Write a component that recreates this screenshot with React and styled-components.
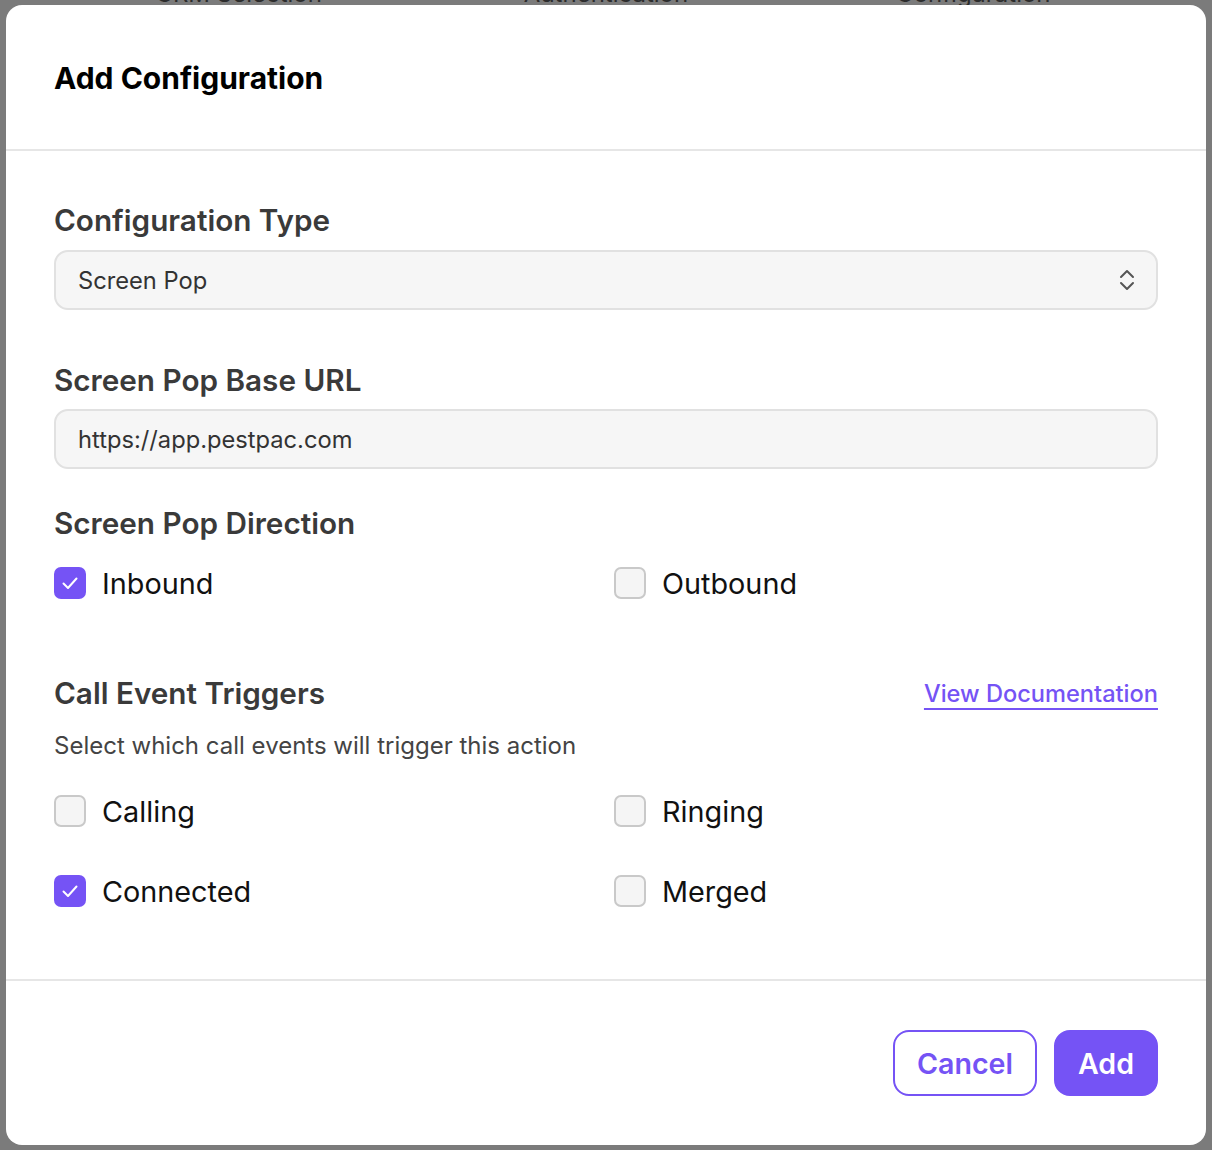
import React from "react";
import styled, { createGlobalStyle } from "styled-components";

const Global = createGlobalStyle`
  html, body { margin: 0; padding: 0; }
  body {
    background: #7b7b7b;
    font-family: Inter, "Noto Sans", "Liberation Sans", sans-serif;
    width: 1212px;
    height: 1150px;
    overflow: hidden;
  }
  * { box-sizing: border-box; }
`;

const purple = "#7553f5";

const Page = styled.div`
  position: relative;
  width: 1212px;
  height: 1150px;
  overflow: hidden;
`;

const Tabs = styled.div`
  display: grid;
  grid-template-columns: repeat(3, 1fr);
  margin: -21px 55px 0 55px;
  color: #2c2c2c;
  font-size: 24px;
  line-height: 30px;
  text-align: center;
`;

const Modal = styled.div`
  position: absolute;
  top: 5px;
  left: 6px;
  width: 1200px;
  height: 1140px;
  background: #fff;
  border-radius: 16px;
  display: flex;
  flex-direction: column;
  overflow: hidden;
`;

const Header = styled.div`
  height: 146px;
  padding: 0 48px;
  display: flex;
  align-items: center;
  border-bottom: 2px solid #e6e6e6;
`;

const Title = styled.h2`
  margin: 0;
  font-size: 30px;
  line-height: 36px;
  font-weight: 700;
  color: #000;
  padding-top: 2px;
`;

const Body = styled.div`
  flex: 1;
  padding: 52px 48px 0 48px;
  display: flex;
  flex-direction: column;
  border-bottom: 2px solid #e6e6e6;
`;

const Label = styled.div`
  font-size: 29.7px;
  line-height: 34px;
  font-weight: 600;
  color: #3a3a3a;
  margin-top: ${(p) => p.$mt || 0}px;
`;

const Field = styled.div`
  margin-top: ${(p) => p.$mt || 12}px;
  height: 60px;
  border: 2px solid #e1e1e1;
  border-radius: 14px;
  background: #f6f6f6;
  display: flex;
  align-items: center;
  justify-content: space-between;
  padding: 0 20px 0 22px;
  font-size: 23.7px;
  color: #333;
`;

const Chevrons = styled.svg`
  width: 18px;
  height: 26px;
  display: block;
`;

const CheckGrid = styled.div`
  display: grid;
  grid-template-columns: 1fr 1fr;
  column-gap: 16px;
  row-gap: 40px;
  margin-top: ${(p) => p.$mt || 0}px;
`;

const CheckItem = styled.label`
  display: flex;
  align-items: center;
  gap: 16px;
  height: 40px;
  font-size: 28.8px;
  color: #111;
`;

const Box = styled.span`
  width: 32px;
  height: 32px;
  border-radius: 7px;
  flex: none;
  display: flex;
  align-items: center;
  justify-content: center;
  background: ${(p) => (p.$checked ? purple : "#f5f5f5")};
  border: ${(p) => (p.$checked ? "none" : "2px solid #c9c9c9")};
`;

const SectionHead = styled.div`
  display: flex;
  align-items: center;
  justify-content: space-between;
  margin-top: 73px;
`;

const DocLink = styled.a`
  font-size: 23.6px;
  font-weight: 500;
  color: ${purple};
  text-decoration: underline;
  text-decoration-thickness: 2px;
  text-underline-offset: 6px;
  cursor: pointer;
`;

const Hint = styled.div`
  margin-top: 20px;
  font-size: 24px;
  line-height: 32px;
  color: #444;
`;

const Footer = styled.div`
  height: 164px;
  padding: 0 48px;
  display: flex;
  align-items: center;
  justify-content: flex-end;
  gap: 17px;
`;

const Button = styled.button`
  height: 66px;
  padding: 0 22px;
  border-radius: 16px;
  font-family: inherit;
  font-size: 28.6px;
  font-weight: 600;
  border: 2px solid ${purple};
  background: ${(p) => (p.$primary ? purple : "#fff")};
  color: ${(p) => (p.$primary ? "#fff" : purple)};
  cursor: pointer;
`;

function Check({ checked, children }) {
  return (
    <CheckItem>
      <Box $checked={checked}>
        {checked && (
          <svg width="20" height="20" viewBox="0 0 20 20">
            <polyline
              points="3.5,10.5 8,15 16.5,5.5"
              fill="none"
              stroke="#fff"
              strokeWidth="2"
              strokeLinecap="round"
              strokeLinejoin="round"
            />
          </svg>
        )}
      </Box>
      {children}
    </CheckItem>
  );
}

export default function App() {
  return (
    <Page>
      <Global />
      <Tabs>
        <span>CRM Selection</span>
        <span>Authentication</span>
        <span>Configuration</span>
      </Tabs>
      <Modal>
        <Header>
          <Title>Add Configuration</Title>
        </Header>
        <Body>
          <Label>Configuration Type</Label>
          <Field $mt={13}>
            <span>Screen Pop</span>
            <Chevrons viewBox="0 0 18 26">
              <polyline
                points="3,10 9,4 15,10"
                fill="none"
                stroke="#555"
                strokeWidth="2"
                strokeLinecap="round"
                strokeLinejoin="round"
              />
              <polyline
                points="3,16 9,22 15,16"
                fill="none"
                stroke="#555"
                strokeWidth="2"
                strokeLinecap="round"
                strokeLinejoin="round"
              />
            </Chevrons>
          </Field>
          <Label $mt={53}>Screen Pop Base URL</Label>
          <Field $mt={12}>
            <span>https://app.pestpac.com</span>
          </Field>
          <Label $mt={37}>Screen Pop Direction</Label>
          <CheckGrid $mt={23}>
            <Check checked>Inbound</Check>
            <Check>Outbound</Check>
          </CheckGrid>
          <SectionHead>
            <Label>Call Event Triggers</Label>
            <DocLink>View Documentation</DocLink>
          </SectionHead>
          <Hint>Select which call events will trigger this action</Hint>
          <CheckGrid $mt={29}>
            <Check>Calling</Check>
            <Check>Ringing</Check>
            <Check checked>Connected</Check>
            <Check>Merged</Check>
          </CheckGrid>
        </Body>
        <Footer>
          <Button>Cancel</Button>
          <Button $primary>Add</Button>
        </Footer>
      </Modal>
    </Page>
  );
}
